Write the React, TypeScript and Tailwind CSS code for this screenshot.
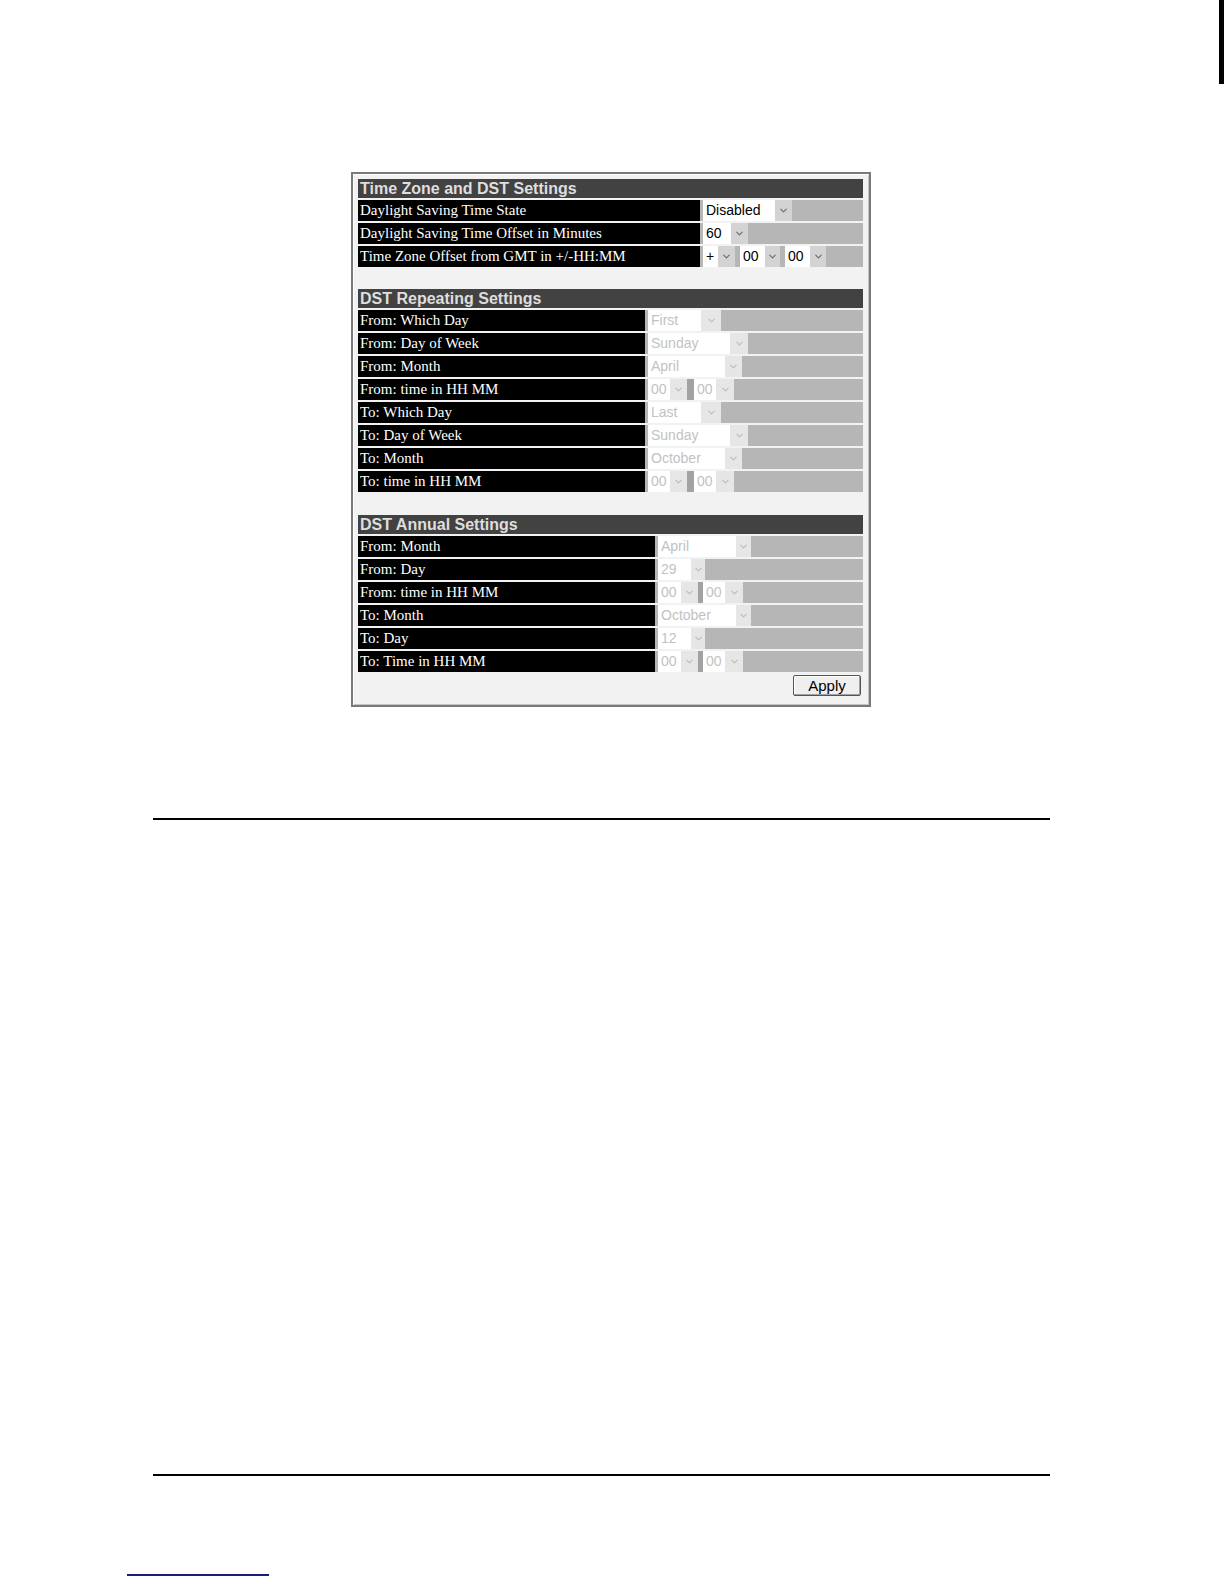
import { ChevronDown } from 'lucide-react';

/**
 * Time Zone and DST Settings
 * Scanned manual page showing the switch web UI table
 */

type Part = { text: string; w: string; aw: string };

function Select({ parts, disabled, bar }: { parts: Part[]; disabled?: boolean; bar?: string }) {
  return (
    <div className="flex h-full">
      {parts.map((p, i) => (
        <div key={i} className="flex h-full">
          {i > 0 && <div className={bar ?? 'w-[6px] bg-[#9a9a9a]'} />}
          <div
            className={`${p.w} h-full bg-white flex items-center pl-[3px] text-[14px] ${
              disabled ? 'text-[#c2c2c2]' : 'text-black'
            }`}
          >
            {p.text}
          </div>
          <div
            className={`${p.aw} h-full flex items-center justify-center ${
              disabled ? 'bg-[#e6e6e6] text-[#bdbdbd]' : 'bg-[#d3d3d3] text-[#6b6b6b]'
            }`}
          >
            <ChevronDown size={11} strokeWidth={2.5} />
          </div>
        </div>
      ))}
    </div>
  );
}

type Row = { label: string; parts: Part[] };

function Section({
  title,
  rows,
  labelW,
  disabled,
  bar,
}: {
  title: string;
  rows: Row[];
  labelW: string;
  disabled?: boolean;
  bar?: string;
}) {
  return (
    <div className="flex flex-col gap-[2px]">
      <div className="h-[19px] bg-[#424242] text-[#dedede] font-bold text-[16px] leading-[19px] pl-[2px] font-['Liberation_Sans',Arial,sans-serif]">
        {title}
      </div>
      {rows.map((r) => (
        <div key={r.label} className="flex h-[21px] bg-[#b6b6b6]">
          <div
            className={`${labelW} bg-black text-white text-[15px] leading-[21px] pl-[2px] font-['Liberation_Serif','Times_New_Roman',serif]`}
          >
            {r.label}
          </div>
          <div className="flex-1 pl-[3px]">
            <Select parts={r.parts} disabled={disabled} bar={bar} />
          </div>
        </div>
      ))}
    </div>
  );
}

const hhmm = (a: string, b: string, bar: string): Part[] => [
  { text: '00', w: a, aw: 'w-[17px]' },
  { text: '00', w: b, aw: 'w-[18px]' },
].map((p) => ({ ...p, bar }));

export default function App() {
  return (
    <div className="relative w-[1224px] h-[1584px] bg-white font-['Liberation_Sans',Arial,sans-serif]">
      <div className="absolute right-0 top-0 w-[5px] h-[84px] bg-black" />

      <div className="pt-[172px] pl-[351px]">
        <div className="w-[520px] border-2 border-[#7a7a7a] bg-[#f2f2f2] pt-[5px] pl-[5px] pr-[6px] pb-[9px] shadow-[inset_1px_1px_0_#ffffff,inset_-1px_-1px_0_#c4c4c4]">
          <Section
            title="Time Zone and DST Settings"
            labelW="w-[342px]"
            bar="w-[5px] bg-[#b6b6b6]"
            rows={[
              { label: 'Daylight Saving Time State', parts: [{ text: 'Disabled', w: 'w-[72px]', aw: 'w-[17px]' }] },
              { label: 'Daylight Saving Time Offset in Minutes', parts: [{ text: '60', w: 'w-[28px]', aw: 'w-[17px]' }] },
              {
                label: 'Time Zone Offset from GMT in +/-HH:MM',
                parts: [
                  { text: '+', w: 'w-[15px]', aw: 'w-[17px]' },
                  { text: '00', w: 'w-[25px]', aw: 'w-[15px]' },
                  { text: '00', w: 'w-[25px]', aw: 'w-[16px]' },
                ],
              },
            ]}
          />

          <div className="h-[22px]" />

          <Section
            title="DST Repeating Settings"
            labelW="w-[287px]"
            disabled
            bar="w-[7px] bg-[#a2a2a2]"
            rows={[
              { label: 'From: Which Day', parts: [{ text: 'First', w: 'w-[53px]', aw: 'w-[20px]' }] },
              { label: 'From: Day of Week', parts: [{ text: 'Sunday', w: 'w-[82px]', aw: 'w-[18px]' }] },
              { label: 'From: Month', parts: [{ text: 'April', w: 'w-[77px]', aw: 'w-[17px]' }] },
              { label: 'From: time in HH MM', parts: hhmm('w-[22px]', 'w-[22px]', '') },
              { label: 'To: Which Day', parts: [{ text: 'Last', w: 'w-[53px]', aw: 'w-[20px]' }] },
              { label: 'To: Day of Week', parts: [{ text: 'Sunday', w: 'w-[82px]', aw: 'w-[18px]' }] },
              { label: 'To: Month', parts: [{ text: 'October', w: 'w-[77px]', aw: 'w-[17px]' }] },
              { label: 'To: time in HH MM', parts: hhmm('w-[22px]', 'w-[22px]', '') },
            ]}
          />

          <div className="h-[23px]" />

          <Section
            title="DST Annual Settings"
            labelW="w-[297px]"
            disabled
            bar="w-[5px] bg-[#a2a2a2]"
            rows={[
              { label: 'From: Month', parts: [{ text: 'April', w: 'w-[78px]', aw: 'w-[15px]' }] },
              { label: 'From: Day', parts: [{ text: '29', w: 'w-[33px]', aw: 'w-[14px]' }] },
              { label: 'From: time in HH MM', parts: hhmm('w-[23px]', 'w-[22px]', '') },
              { label: 'To: Month', parts: [{ text: 'October', w: 'w-[78px]', aw: 'w-[15px]' }] },
              { label: 'To: Day', parts: [{ text: '12', w: 'w-[33px]', aw: 'w-[14px]' }] },
              { label: 'To: Time in HH MM', parts: hhmm('w-[23px]', 'w-[22px]', '') },
            ]}
          />

          <div className="flex justify-end pt-[3px] pr-[2px]">
            <button className="w-[68px] h-[21px] bg-[#efefef] border border-[#555555] rounded-[2px] shadow-[inset_-1px_-1px_0_#a0a0a0,inset_1px_1px_0_#ffffff] text-[15px] leading-[19px] text-black">
              Apply
            </button>
          </div>
        </div>
      </div>

      <div className="mt-[111px] ml-[153px] w-[897px] h-[2px] bg-black" />
      <div className="mt-[654px] ml-[153px] w-[897px] h-[2px] bg-black" />
      <div className="mt-[98px] ml-[127px] w-[142px] h-[2px] bg-[#1b1b7a]" />
    </div>
  );
}
